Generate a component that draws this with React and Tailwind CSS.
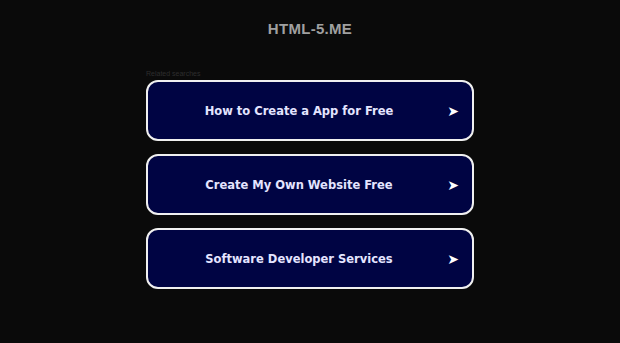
const links = [
  'How to Create a App for Free',
  'Create My Own Website Free',
  'Software Developer Services',
];

export default function App() {
  return (
    <div className="min-h-[343px] w-full bg-[#0a0a0a] font-['Liberation_Sans',Arial,sans-serif]">
      <div className="pt-[19px] text-center text-[15px] font-bold leading-[20px] tracking-[0.3px] text-[#a0a0a0]">
        HTML-5.ME
      </div>
      <div className="mx-auto mt-[30px] w-[328px]">
        <div className="mb-[1px] h-[10px] text-[7px] leading-[10px] text-[#2e2e2e]">Related searches</div>
        <div className="flex flex-col gap-[13px]">
          {links.map((t) => (
            <a
              key={t}
              href="#"
              className="relative flex h-[61px] items-center justify-center rounded-[12px] border-2 border-[#f0f0f0] bg-[#000443] pt-[2px] pr-[22px] font-['DejaVu_Sans',Verdana,sans-serif] text-[11.5px] font-bold text-[#e4e4ff]"
            >
              <span>{t}</span>
              <span className="absolute right-[13px] top-[19px] text-[14px] leading-[20px] text-white">➤</span>
            </a>
          ))}
        </div>
      </div>
    </div>
  );
}
